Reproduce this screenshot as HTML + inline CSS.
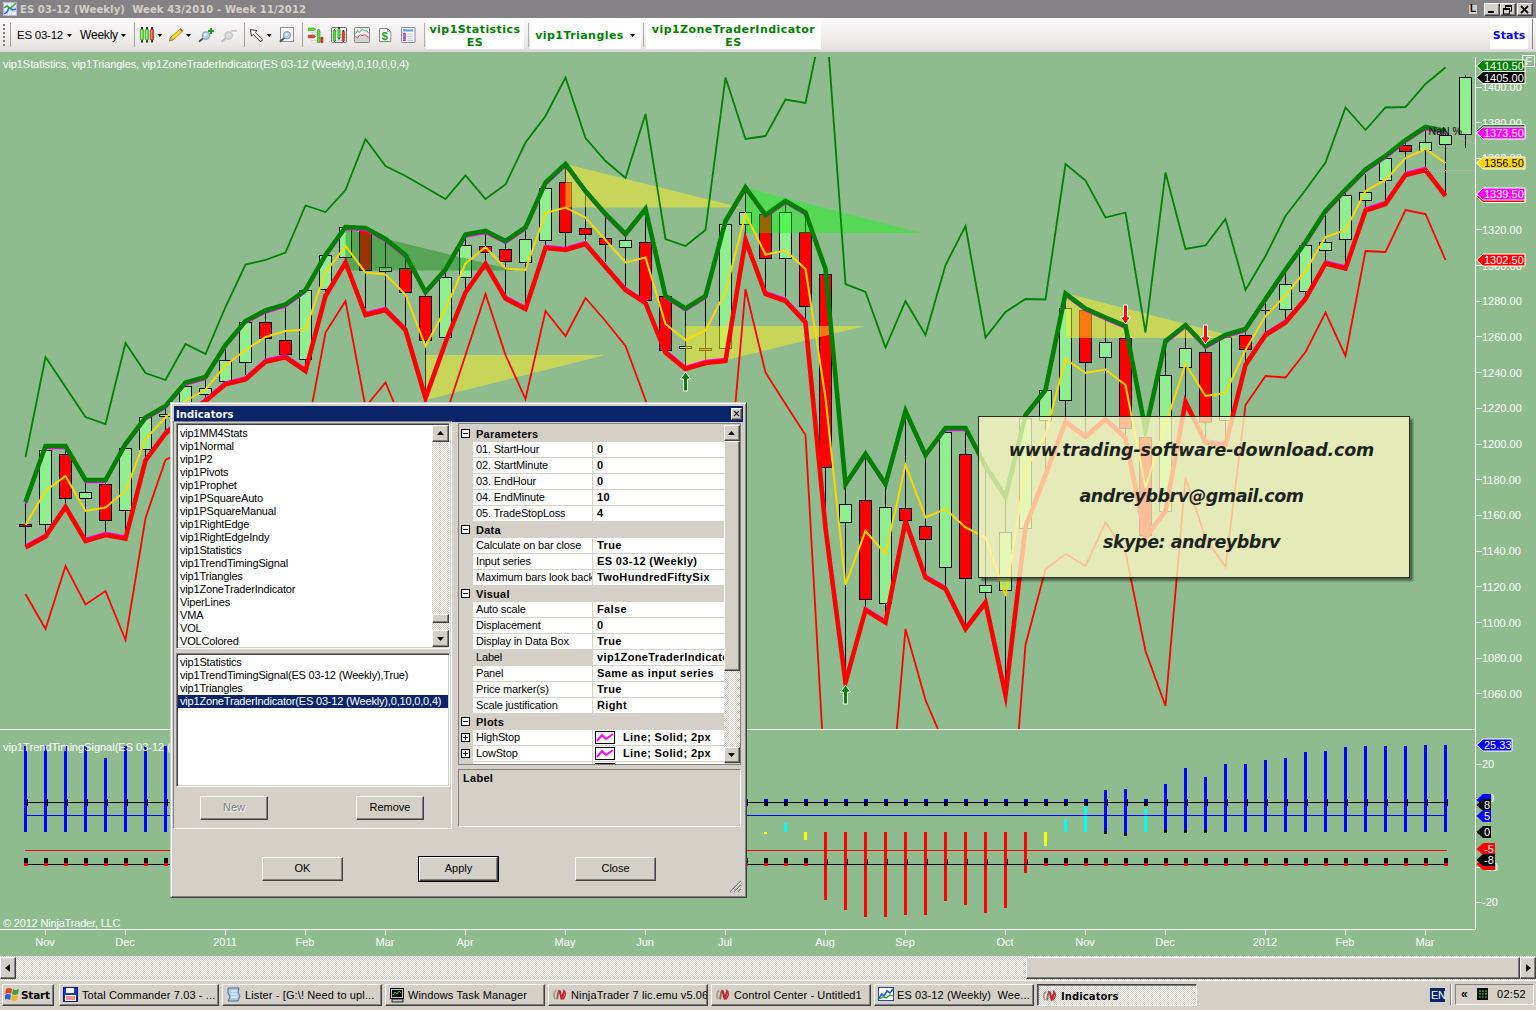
<!DOCTYPE html>
<html><head><meta charset="utf-8"><title>ES 03-12 (Weekly)</title>
<style>
html,body{margin:0;padding:0;background:#d4d0c8;}
body{width:1536px;height:1010px;overflow:hidden;position:relative;font-family:'Liberation Sans',Arial,sans-serif;font-size:11px;color:#000;}
.abs{position:absolute;}
.t{position:absolute;white-space:nowrap;line-height:13px;}
.raised{border:1px solid;border-color:#fff #404040 #404040 #fff;box-shadow:inset -1px -1px 0 #808080,inset 1px 1px 0 #d4d0c8;background:#d4d0c8;box-sizing:border-box;}
.sunken{border:1px solid;border-color:#808080 #fff #fff #808080;box-shadow:inset 1px 1px 0 #404040,inset -1px -1px 0 #d4d0c8;background:#fff;box-sizing:border-box;}
.btn{position:absolute;box-sizing:border-box;background:#d4d0c8;border:1px solid;border-color:#fff #404040 #404040 #fff;box-shadow:inset -1px -1px 0 #808080;text-align:center;line-height:21px;font-size:11px;}
.dith{background-color:#eae8e3;background-image:linear-gradient(45deg,#d4d0c8 25%,transparent 25%,transparent 75%,#d4d0c8 75%),linear-gradient(45deg,#d4d0c8 25%,#fff 25%,#fff 75%,#d4d0c8 75%);background-size:2px 2px;background-position:0 0,1px 1px;}
.tb{position:absolute;top:984px;height:22px;box-sizing:border-box;border:1px solid;border-color:#fff #404040 #404040 #fff;box-shadow:inset -1px -1px 0 #808080;background:#d4d0c8;font-size:11px;line-height:21px;white-space:nowrap;overflow:hidden;}
.tb span{position:absolute;left:22px;top:0;}
.pg{position:absolute;left:0;height:16px;width:266px;box-sizing:border-box;}
.pg .n{position:absolute;left:14px;top:0;width:119px;height:15px;background:#fff;border-right:1px solid #d4d0c8;border-bottom:1px solid #d4d0c8;line-height:15px;padding-left:3px;box-sizing:content-box;overflow:hidden;white-space:nowrap;width:116px;letter-spacing:-0.17px;}
.pg .v{position:absolute;left:134px;top:0;width:128px;height:15px;background:#fff;border-bottom:1px solid #d4d0c8;line-height:15px;padding-left:4px;font-weight:bold;overflow:hidden;white-space:nowrap;letter-spacing:0.38px;}
.pg.cat{background:#d4d0c8;font-weight:bold;line-height:16px;}
.pg.cat b{position:absolute;left:17px;top:0;letter-spacing:0.25px;}
.pm{position:absolute;left:2px;top:3px;width:7px;height:7px;border:1px solid #000;background:#fff;}
.pm:before{content:'';position:absolute;left:1px;top:3px;width:5px;height:1px;background:#000;}
.pm.plus:after{content:'';position:absolute;left:3px;top:1px;width:1px;height:5px;background:#000;}
.dj{font-family:'DejaVu Sans','Liberation Sans',sans-serif;}
.li{position:absolute;left:3px;white-space:nowrap;line-height:13px;height:13px;letter-spacing:-0.18px;}
</style></head>
<body>
<svg class="abs" style="left:0;top:0" width="1536" height="1010" viewBox="0 0 1536 1010" font-family="'Liberation Sans',Arial,sans-serif" font-size="11">
<rect x="0" y="52" width="1536" height="905" fill="#8fbc8f"/>
<defs><clipPath id="cp"><rect x="0" y="57" width="1475" height="672"/></clipPath></defs>
<g clip-path="url(#cp)">
<g shape-rendering="crispEdges" stroke="#000" stroke-width="1">
<line x1="25.5" y1="502" x2="25.5" y2="547"/>
<rect x="19.5" y="524.5" width="12" height="2" fill="#ff0000"/>
<line x1="45.5" y1="446" x2="45.5" y2="535"/>
<rect x="39.5" y="450.5" width="12" height="74" fill="#90ee90"/>
<line x1="65.5" y1="449" x2="65.5" y2="506"/>
<rect x="59.5" y="454.5" width="12" height="44" fill="#ff0000"/>
<line x1="85.5" y1="482" x2="85.5" y2="540"/>
<rect x="79.5" y="492.5" width="12" height="6" fill="#90ee90"/>
<line x1="105.5" y1="480" x2="105.5" y2="534"/>
<rect x="99.5" y="484.5" width="12" height="36" fill="#ff0000"/>
<line x1="125.5" y1="444" x2="125.5" y2="540"/>
<rect x="119.5" y="448.5" width="12" height="62" fill="#90ee90"/>
<line x1="145.5" y1="416" x2="145.5" y2="460"/>
<rect x="139.5" y="417.5" width="12" height="32" fill="#90ee90"/>
<line x1="165.5" y1="406" x2="165.5" y2="430"/>
<rect x="159.5" y="414.5" width="12" height="2" fill="#90ee90"/>
<line x1="185.5" y1="382" x2="185.5" y2="414"/>
<rect x="179.5" y="386.5" width="12" height="16" fill="#90ee90"/>
<line x1="205.5" y1="377" x2="205.5" y2="400"/>
<rect x="199.5" y="388.5" width="12" height="6" fill="#90ee90"/>
<line x1="225.5" y1="346" x2="225.5" y2="383"/>
<rect x="219.5" y="360.5" width="12" height="21" fill="#90ee90"/>
<line x1="245.5" y1="321" x2="245.5" y2="375"/>
<rect x="239.5" y="322.5" width="12" height="40" fill="#90ee90"/>
<line x1="265.5" y1="311" x2="265.5" y2="360"/>
<rect x="259.5" y="322.5" width="12" height="16" fill="#ff0000"/>
<line x1="285.5" y1="305" x2="285.5" y2="356"/>
<rect x="279.5" y="340.5" width="12" height="14" fill="#ff0000"/>
<line x1="305.5" y1="290" x2="305.5" y2="371"/>
<rect x="299.5" y="290.5" width="12" height="69" fill="#90ee90"/>
<line x1="325.5" y1="255" x2="325.5" y2="296"/>
<rect x="319.5" y="255.5" width="12" height="34" fill="#90ee90"/>
<line x1="345.5" y1="227" x2="345.5" y2="262"/>
<rect x="339.5" y="227.5" width="12" height="30" fill="#90ee90"/>
<line x1="365.5" y1="228" x2="365.5" y2="308"/>
<rect x="359.5" y="230.5" width="12" height="40" fill="#ff0000"/>
<line x1="385.5" y1="239" x2="385.5" y2="310"/>
<rect x="379.5" y="267.5" width="12" height="4" fill="#90ee90"/>
<line x1="405.5" y1="255" x2="405.5" y2="330"/>
<rect x="399.5" y="268.5" width="12" height="24" fill="#ff0000"/>
<line x1="425.5" y1="291" x2="425.5" y2="398"/>
<rect x="419.5" y="296.5" width="12" height="44" fill="#ff0000"/>
<line x1="445.5" y1="270" x2="445.5" y2="342"/>
<rect x="439.5" y="277.5" width="12" height="60" fill="#90ee90"/>
<line x1="465.5" y1="234" x2="465.5" y2="296"/>
<rect x="459.5" y="245.5" width="12" height="32" fill="#90ee90"/>
<line x1="485.5" y1="231" x2="485.5" y2="264"/>
<rect x="479.5" y="246.5" width="12" height="6" fill="#ff0000"/>
<line x1="505.5" y1="241" x2="505.5" y2="297"/>
<rect x="499.5" y="249.5" width="12" height="12" fill="#ff0000"/>
<line x1="525.5" y1="228" x2="525.5" y2="309"/>
<rect x="519.5" y="239.5" width="12" height="23" fill="#90ee90"/>
<line x1="545.5" y1="182" x2="545.5" y2="248"/>
<rect x="539.5" y="188.5" width="12" height="52" fill="#90ee90"/>
<line x1="565.5" y1="164" x2="565.5" y2="250"/>
<rect x="559.5" y="182.5" width="12" height="50" fill="#ff0000"/>
<line x1="585.5" y1="191" x2="585.5" y2="244"/>
<rect x="579.5" y="228.5" width="12" height="6" fill="#ff0000"/>
<line x1="605.5" y1="215" x2="605.5" y2="262"/>
<rect x="599.5" y="238.5" width="12" height="6" fill="#ff0000"/>
<line x1="625.5" y1="234" x2="625.5" y2="289"/>
<rect x="619.5" y="240.5" width="12" height="7" fill="#90ee90"/>
<line x1="645.5" y1="209" x2="645.5" y2="303"/>
<rect x="639.5" y="242.5" width="12" height="58" fill="#ff0000"/>
<line x1="665.5" y1="296" x2="665.5" y2="352"/>
<rect x="659.5" y="296.5" width="12" height="54" fill="#ff0000"/>
<line x1="685.5" y1="310" x2="685.5" y2="370"/>
<rect x="679.5" y="346.5" width="12" height="2" fill="#90ee90"/>
<line x1="705.5" y1="298" x2="705.5" y2="362"/>
<rect x="699.5" y="348.5" width="12" height="2" fill="#ff6a00"/>
<line x1="725.5" y1="221" x2="725.5" y2="361"/>
<rect x="719.5" y="224.5" width="12" height="124" fill="#90ee90"/>
<line x1="745.5" y1="189" x2="745.5" y2="240"/>
<rect x="739.5" y="212.5" width="12" height="12" fill="#90ee90"/>
<line x1="765.5" y1="215" x2="765.5" y2="295"/>
<rect x="759.5" y="214.5" width="12" height="44" fill="#ff0000"/>
<line x1="785.5" y1="201" x2="785.5" y2="301"/>
<rect x="779.5" y="212.5" width="12" height="46" fill="#90ee90"/>
<line x1="805.5" y1="212" x2="805.5" y2="322"/>
<rect x="799.5" y="232.5" width="12" height="74" fill="#ff0000"/>
<line x1="825.5" y1="269" x2="825.5" y2="512"/>
<rect x="819.5" y="274.5" width="12" height="193" fill="#ff0000"/>
<line x1="845.5" y1="484" x2="845.5" y2="682"/>
<rect x="839.5" y="504.5" width="12" height="18" fill="#90ee90"/>
<line x1="865.5" y1="454" x2="865.5" y2="610"/>
<rect x="859.5" y="500.5" width="12" height="99" fill="#ff0000"/>
<line x1="885.5" y1="484" x2="885.5" y2="622"/>
<rect x="879.5" y="507.5" width="12" height="96" fill="#90ee90"/>
<line x1="905.5" y1="411" x2="905.5" y2="521"/>
<rect x="899.5" y="508.5" width="12" height="12" fill="#ff0000"/>
<line x1="925.5" y1="455" x2="925.5" y2="578"/>
<rect x="919.5" y="526.5" width="12" height="13" fill="#ff0000"/>
<line x1="945.5" y1="428" x2="945.5" y2="588"/>
<rect x="939.5" y="432.5" width="12" height="135" fill="#90ee90"/>
<line x1="965.5" y1="428" x2="965.5" y2="629"/>
<rect x="959.5" y="454.5" width="12" height="124" fill="#ff0000"/>
<line x1="985.5" y1="466" x2="985.5" y2="602"/>
<rect x="979.5" y="585.5" width="12" height="7" fill="#90ee90"/>
<line x1="1005.5" y1="497" x2="1005.5" y2="695"/>
<rect x="999.5" y="532.5" width="12" height="58" fill="#90ee90"/>
<line x1="1025.5" y1="415" x2="1025.5" y2="528"/>
<rect x="1019.5" y="418.5" width="12" height="110" fill="#90ee90"/>
<line x1="1045.5" y1="390" x2="1045.5" y2="475"/>
<rect x="1039.5" y="390.5" width="12" height="30" fill="#90ee90"/>
<line x1="1065.5" y1="294" x2="1065.5" y2="422"/>
<rect x="1059.5" y="308.5" width="12" height="92" fill="#90ee90"/>
<line x1="1085.5" y1="308" x2="1085.5" y2="436"/>
<rect x="1079.5" y="310.5" width="12" height="52" fill="#ff0000"/>
<line x1="1105.5" y1="319" x2="1105.5" y2="420"/>
<rect x="1099.5" y="342.5" width="12" height="15" fill="#90ee90"/>
<line x1="1125.5" y1="326" x2="1125.5" y2="440"/>
<rect x="1119.5" y="338.5" width="12" height="90" fill="#ff0000"/>
<line x1="1145.5" y1="430" x2="1145.5" y2="540"/>
<rect x="1139.5" y="437.5" width="12" height="98" fill="#ff0000"/>
<line x1="1165.5" y1="341" x2="1165.5" y2="512"/>
<rect x="1159.5" y="375.5" width="12" height="136" fill="#90ee90"/>
<line x1="1185.5" y1="325" x2="1185.5" y2="401"/>
<rect x="1179.5" y="348.5" width="12" height="19" fill="#90ee90"/>
<line x1="1205.5" y1="346" x2="1205.5" y2="442"/>
<rect x="1199.5" y="352.5" width="12" height="70" fill="#ff0000"/>
<line x1="1225.5" y1="335" x2="1225.5" y2="445"/>
<rect x="1219.5" y="337.5" width="12" height="83" fill="#90ee90"/>
<line x1="1245.5" y1="329" x2="1245.5" y2="365"/>
<rect x="1239.5" y="335.5" width="12" height="14" fill="#ff0000"/>
<line x1="1265.5" y1="298" x2="1265.5" y2="335"/>
<rect x="1259.0" y="309.5" width="13" height="1" fill="#000" stroke="none"/>
<line x1="1285.5" y1="270" x2="1285.5" y2="322"/>
<rect x="1279.5" y="284.5" width="12" height="25" fill="#90ee90"/>
<line x1="1305.5" y1="244" x2="1305.5" y2="299"/>
<rect x="1299.5" y="245.5" width="12" height="46" fill="#90ee90"/>
<line x1="1325.5" y1="215" x2="1325.5" y2="261"/>
<rect x="1319.5" y="242.5" width="12" height="8" fill="#90ee90"/>
<line x1="1345.5" y1="191" x2="1345.5" y2="268"/>
<rect x="1339.5" y="195.5" width="12" height="44" fill="#90ee90"/>
<line x1="1365.5" y1="174" x2="1365.5" y2="210"/>
<rect x="1359.5" y="192.5" width="12" height="8" fill="#90ee90"/>
<line x1="1385.5" y1="156" x2="1385.5" y2="202"/>
<rect x="1379.5" y="158.5" width="12" height="22" fill="#90ee90"/>
<line x1="1405.5" y1="142" x2="1405.5" y2="174"/>
<rect x="1399.5" y="145.5" width="12" height="6" fill="#ff0000"/>
<line x1="1425.5" y1="128" x2="1425.5" y2="170"/>
<rect x="1419.5" y="142.5" width="12" height="8" fill="#90ee90"/>
<line x1="1445.5" y1="131" x2="1445.5" y2="195"/>
<rect x="1439.5" y="135.5" width="12" height="9" fill="#90ee90"/>
<line x1="1465.5" y1="75" x2="1465.5" y2="148"/>
<rect x="1459.5" y="77.5" width="12" height="57" fill="#90ee90"/>
</g>
<polygon points="345.5,229 345.5,270.5 515,270.5" fill="#008000" fill-opacity="0.4"/>
<polygon points="425.5,355 425.5,400 605,355" fill="#fff021" fill-opacity="0.5"/>
<polygon points="685.5,326 685.5,370 865,326" fill="#fff021" fill-opacity="0.5"/>
<polygon points="565.5,164 565.5,207.5 741,207.5" fill="#fff021" fill-opacity="0.5"/>
<polygon points="745.5,187.5 745.5,233 921,233" fill="#00ff00" fill-opacity="0.4"/>
<polygon points="1065.5,293 1065.5,338 1240,338" fill="#fff021" fill-opacity="0.5"/>
<polyline points="25.5,457.0 45.5,357.0 65.5,387.0 85.5,417.0 105.5,424.0 125.5,343.0 145.5,373.0 165.5,380.0 185.5,344.0 205.5,354.0 225.5,307.0 245.5,264.5 265.5,260.0 285.5,252.5 305.5,205.5 325.5,212.0 345.5,190.0 365.5,139.0 385.5,166.0 405.5,176.0 425.5,187.5 445.5,199.0 465.5,175.5 485.5,199.0 505.5,184.5 525.5,142.5 545.5,116.0 565.5,77.5 585.5,138.0 605.5,161.0 625.5,178.0 645.5,114.0 665.5,239.0 685.5,246.0 705.5,230.0 725.5,77.5 745.5,139.0 765.5,136.0 785.5,99.5 805.5,103.0 825.5,8.0 845.5,284.0 865.5,292.0 885.5,347.5 905.5,301.0 925.5,335.0 945.5,265.0 965.5,226.0 985.5,337.5 1005.5,312.0 1025.5,299.0 1045.5,299.5 1065.5,164.0 1085.5,180.5 1105.5,217.5 1125.5,212.5 1145.5,332.5 1165.5,172.5 1185.5,249.0 1205.5,245.5 1225.5,219.0 1245.5,290.0 1265.5,256.0 1285.5,216.0 1305.5,190.0 1325.5,162.5 1345.5,107.5 1365.5,130.0 1385.5,107.5 1405.5,107.0 1425.5,84.0 1445.5,67.5" fill="none" stroke="#008000" stroke-width="1.8" stroke-linejoin="miter"/>
<polyline points="25.5,594.0 45.5,629.0 65.5,566.0 85.5,604.5 105.5,591.0 125.5,640.0 145.5,518.0 165.5,460.0 185.5,450.0 205.5,445.0 225.5,430.0 245.5,425.0 265.5,410.0 285.5,405.0 305.5,440.0 325.5,332.5 345.5,301.0 365.5,407.0 385.5,382.5 405.5,430.0 425.5,470.0 445.5,416.0 465.5,355.0 485.5,294.0 505.5,355.0 525.5,399.0 545.5,311.0 565.5,336.0 585.5,298.0 605.5,321.0 625.5,346.0 645.5,400.0 665.5,450.0 685.5,470.0 705.5,460.0 725.5,516.0 745.5,289.0 765.5,372.5 785.5,404.0 805.5,435.0 825.5,790.0 845.5,900.0 865.5,850.0 885.5,860.0 905.5,629.0 925.5,700.0 945.5,747.0 965.5,800.0 985.5,780.0 1005.5,897.0 1025.5,645.0 1045.5,569.0 1065.5,554.0 1085.5,566.0 1105.5,522.5 1125.5,552.0 1145.5,651.0 1165.5,706.0 1185.5,477.5 1205.5,538.0 1225.5,567.0 1245.5,405.0 1265.5,376.0 1285.5,377.5 1305.5,352.0 1325.5,312.5 1345.5,356.0 1365.5,251.0 1385.5,252.0 1405.5,210.0 1425.5,214.0 1445.5,260.0" fill="none" stroke="#ff0000" stroke-width="1.8" stroke-linejoin="miter"/>
<polyline points="25.5,504.2 45.5,448.2 65.5,448.2 85.5,482.2 105.5,482.2 125.5,446.2 145.5,419.7 165.5,408.2 185.5,384.7 205.5,379.2 225.5,347.2 245.5,323.2 265.5,312.7 285.5,306.7 305.5,292.2 325.5,257.2 345.5,229.2 365.5,230.2 385.5,241.2 405.5,257.2 425.5,294.2 445.5,271.7 465.5,236.7 485.5,233.2 505.5,243.2 525.5,229.7 545.5,184.7 565.5,166.2 585.5,193.2 605.5,216.2 625.5,236.2 645.5,211.2 665.5,298.2 685.5,310.7 705.5,298.2 725.5,223.2 745.5,189.7 765.5,217.2 785.5,203.2 805.5,214.7 825.5,271.2 845.5,486.2 865.5,456.2 885.5,486.2 905.5,413.2 925.5,457.2 945.5,430.2 965.5,430.2 985.5,468.2 1005.5,499.2 1025.5,417.2 1045.5,392.2 1065.5,295.7 1085.5,310.7 1105.5,319.7 1125.5,328.2 1145.5,432.2 1165.5,343.2 1185.5,327.2 1205.5,348.2 1225.5,337.2 1245.5,331.2 1265.5,301.2 1285.5,271.7 1305.5,244.2 1325.5,213.2 1345.5,191.7 1365.5,171.7 1385.5,158.2 1405.5,142.2 1425.5,129.2 1445.5,133.2" fill="none" stroke="#ff00ff" stroke-width="2" stroke-linejoin="round"/>
<polyline points="25.5,545.3 45.5,534.3 65.5,504.8 85.5,538.8 105.5,532.8 125.5,536.3 145.5,458.3 165.5,431.3 185.5,413.8 205.5,398.8 225.5,382.1 245.5,377.1 265.5,359.6 285.5,355.1 305.5,368.8 325.5,293.8 345.5,260.3 365.5,312.8 385.5,307.8 405.5,327.8 425.5,395.8 445.5,340.3 465.5,290.3 485.5,261.8 505.5,296.3 525.5,306.8 545.5,245.8 565.5,247.8 585.5,241.8 605.5,264.8 625.5,287.8 645.5,300.8 665.5,350.3 685.5,366.8 705.5,360.8 725.5,358.8 745.5,237.8 765.5,291.8 785.5,298.8 805.5,320.3 825.5,525.8 845.5,680.3 865.5,607.8 885.5,620.3 905.5,518.8 925.5,575.3 945.5,586.8 965.5,626.8 985.5,600.3 1005.5,692.8 1025.5,524.8 1045.5,472.8 1065.5,419.8 1085.5,434.8 1105.5,417.3 1125.5,435.8 1145.5,535.8 1165.5,508.8 1185.5,399.8 1205.5,440.3 1225.5,442.8 1245.5,362.8 1265.5,332.8 1285.5,320.3 1305.5,296.8 1325.5,261.2 1345.5,266.3 1365.5,208.3 1385.5,201.8 1405.5,172.8 1425.5,167.8 1445.5,193.8" fill="none" stroke="#ff00ff" stroke-width="2" stroke-linejoin="round"/>
<polyline points="25.5,547.5 45.5,536.5 65.5,507.0 85.5,541.0 105.5,535.0 125.5,538.5 145.5,460.5 165.5,433.5 185.5,416.0 205.5,401.0 225.5,384.3 245.5,379.3 265.5,361.8 285.5,357.3 305.5,371.0 325.5,296.0 345.5,262.5 365.5,315.0 385.5,310.0 405.5,330.0 425.5,398.0 445.5,342.5 465.5,292.5 485.5,264.0 505.5,298.5 525.5,309.0 545.5,248.0 565.5,250.0 585.5,244.0 605.5,267.0 625.5,290.0 645.5,303.0 665.5,352.5 685.5,369.0 705.5,363.0 725.5,361.0 745.5,240.0 765.5,294.0 785.5,301.0 805.5,322.5 825.5,528.0 845.5,682.5 865.5,610.0 885.5,622.5 905.5,521.0 925.5,577.5 945.5,589.0 965.5,629.0 985.5,602.5 1005.5,695.0 1025.5,527.0 1045.5,475.0 1065.5,422.0 1085.5,437.0 1105.5,419.5 1125.5,438.0 1145.5,538.0 1165.5,511.0 1185.5,402.0 1205.5,442.5 1225.5,445.0 1245.5,365.0 1265.5,335.0 1285.5,322.5 1305.5,299.0 1325.5,263.4 1345.5,268.5 1365.5,210.5 1385.5,204.0 1405.5,175.0 1425.5,170.0 1445.5,196.0" fill="none" stroke="#ff0000" stroke-width="4.6" stroke-linejoin="miter" stroke-miterlimit="12"/>
<polyline points="25.5,502.0 45.5,446.0 65.5,446.0 85.5,480.0 105.5,480.0 125.5,444.0 145.5,417.5 165.5,406.0 185.5,382.5 205.5,377.0 225.5,345.0 245.5,321.0 265.5,310.5 285.5,304.5 305.5,290.0 325.5,255.0 345.5,227.0 365.5,228.0 385.5,239.0 405.5,255.0 425.5,292.0 445.5,269.5 465.5,234.5 485.5,231.0 505.5,241.0 525.5,227.5 545.5,182.5 565.5,164.0 585.5,191.0 605.5,214.0 625.5,234.0 645.5,209.0 665.5,296.0 685.5,308.5 705.5,296.0 725.5,221.0 745.5,187.5 765.5,215.0 785.5,201.0 805.5,212.5 825.5,269.0 845.5,484.0 865.5,454.0 885.5,484.0 905.5,411.0 925.5,455.0 945.5,428.0 965.5,428.0 985.5,466.0 1005.5,497.0 1025.5,415.0 1045.5,390.0 1065.5,293.5 1085.5,308.5 1105.5,317.5 1125.5,326.0 1145.5,430.0 1165.5,341.0 1185.5,325.0 1205.5,346.0 1225.5,335.0 1245.5,329.0 1265.5,299.0 1285.5,269.5 1305.5,242.0 1325.5,211.0 1345.5,189.5 1365.5,169.5 1385.5,156.0 1405.5,140.0 1425.5,127.0 1445.5,131.0" fill="none" stroke="#008000" stroke-width="4.6" stroke-linejoin="miter" stroke-miterlimit="12"/>
<polyline points="25.5,525.0 45.5,491.0 65.5,476.0 85.5,511.0 105.5,507.5 125.5,491.0 145.5,439.0 165.5,417.5 185.5,401.0 205.5,389.5 225.5,365.5 245.5,350.0 265.5,337.0 285.5,331.0 305.5,329.5 325.5,272.5 345.5,246.0 365.5,272.5 385.5,274.5 405.5,294.5 425.5,346.0 445.5,309.0 465.5,263.5 485.5,247.0 505.5,268.5 525.5,270.0 545.5,213.0 565.5,207.5 585.5,217.5 605.5,240.0 625.5,262.5 645.5,257.5 665.5,324.0 685.5,340.0 705.5,330.5 725.5,292.0 745.5,214.0 765.5,254.5 785.5,250.5 805.5,269.0 825.5,397.5 845.5,585.0 865.5,531.0 885.5,554.0 905.5,465.0 925.5,517.5 945.5,509.0 965.5,527.5 985.5,537.5 1005.5,596.0 1025.5,470.0 1045.5,435.0 1065.5,359.0 1085.5,373.0 1105.5,369.5 1125.5,385.0 1145.5,487.5 1165.5,425.0 1185.5,364.0 1205.5,396.0 1225.5,393.0 1245.5,350.0 1265.5,316.0 1285.5,295.5 1305.5,271.0 1325.5,237.0 1345.5,230.0 1365.5,191.0 1385.5,180.0 1405.5,158.0 1425.5,149.0 1445.5,163.0" fill="none" stroke="#ffd700" stroke-width="2" stroke-linejoin="miter"/>
<path d="M685.5 372 l5 7 h-3 v12 h-4 v-12 h-3 z" fill="#008000" stroke="#fff" stroke-width="1"/>
<path d="M845.5 685 l5 7 h-3 v12 h-4 v-12 h-3 z" fill="#008000" stroke="#fff" stroke-width="1"/>
<path d="M1125.5 324 l5 -7 h-3 v-12 h-4 v12 h-3 z" fill="#ff0000" stroke="#fff" stroke-width="1"/>
<path d="M1205.5 344 l5 -7 h-3 v-12 h-4 v12 h-3 z" fill="#ff0000" stroke="#fff" stroke-width="1"/>
<line x1="1425" y1="170.5" x2="1475" y2="170.5" stroke="#d8b0b0" stroke-width="1" stroke-dasharray="1 1"/>
<line x1="1445" y1="132" x2="1475" y2="144" stroke="#d8b0b0" stroke-width="1" stroke-dasharray="1 1"/>
<text x="1428.5" y="135" fill="#000" textLength="33.5" lengthAdjust="spacingAndGlyphs">NaN %</text>
</g>
<text x="3" y="68" fill="#fff" textLength="406" lengthAdjust="spacing">vip1Statistics, vip1Triangles, vip1ZoneTraderIndicator(ES 03-12 (Weekly),0,10,0,0,4)</text>
<text x="3" y="927" fill="#fff" textLength="117.5" lengthAdjust="spacing">© 2012 NinjaTrader, LLC</text>
<g shape-rendering="crispEdges">
<rect x="23.5" y="746" width="3" height="86" fill="#0000ff"/>
<rect x="43.5" y="746" width="3" height="86" fill="#0000ff"/>
<rect x="63.5" y="746" width="3" height="86" fill="#0000ff"/>
<rect x="83.5" y="746" width="3" height="86" fill="#0000ff"/>
<rect x="103.5" y="758" width="3" height="74" fill="#0000ff"/>
<rect x="123.5" y="746" width="3" height="86" fill="#0000ff"/>
<rect x="143.5" y="746" width="3" height="86" fill="#0000ff"/>
<rect x="163.5" y="746" width="3" height="86" fill="#0000ff"/>
<rect x="183.5" y="760" width="3" height="72" fill="#0000ff"/>
<rect x="203.5" y="760" width="3" height="72" fill="#0000ff"/>
<rect x="223.5" y="760" width="3" height="72" fill="#0000ff"/>
<rect x="243.5" y="760" width="3" height="72" fill="#0000ff"/>
<rect x="263.5" y="760" width="3" height="72" fill="#0000ff"/>
<rect x="283.5" y="760" width="3" height="72" fill="#0000ff"/>
<rect x="303.5" y="760" width="3" height="72" fill="#0000ff"/>
<rect x="323.5" y="760" width="3" height="72" fill="#0000ff"/>
<rect x="343.5" y="760" width="3" height="72" fill="#0000ff"/>
<rect x="363.5" y="760" width="3" height="72" fill="#0000ff"/>
<rect x="383.5" y="760" width="3" height="72" fill="#0000ff"/>
<rect x="403.5" y="760" width="3" height="72" fill="#0000ff"/>
<rect x="423.5" y="760" width="3" height="72" fill="#0000ff"/>
<rect x="443.5" y="760" width="3" height="72" fill="#0000ff"/>
<rect x="463.5" y="760" width="3" height="72" fill="#0000ff"/>
<rect x="483.5" y="760" width="3" height="72" fill="#0000ff"/>
<rect x="503.5" y="760" width="3" height="72" fill="#0000ff"/>
<rect x="523.5" y="760" width="3" height="72" fill="#0000ff"/>
<rect x="543.5" y="760" width="3" height="72" fill="#0000ff"/>
<rect x="563.5" y="760" width="3" height="72" fill="#0000ff"/>
<rect x="583.5" y="760" width="3" height="72" fill="#0000ff"/>
<rect x="603.5" y="760" width="3" height="72" fill="#0000ff"/>
<rect x="623.5" y="760" width="3" height="72" fill="#0000ff"/>
<rect x="643.5" y="760" width="3" height="72" fill="#0000ff"/>
<rect x="663.5" y="760" width="3" height="72" fill="#0000ff"/>
<rect x="683.5" y="760" width="3" height="72" fill="#0000ff"/>
<rect x="703.5" y="760" width="3" height="72" fill="#0000ff"/>
<rect x="723.5" y="760" width="3" height="72" fill="#0000ff"/>
<rect x="743.5" y="832" width="3" height="2" fill="#ffff00"/>
<rect x="763.5" y="832" width="3" height="2" fill="#ffff00"/>
<rect x="783.5" y="823" width="3" height="9" fill="#00ffff"/>
<rect x="803.5" y="832" width="3" height="8" fill="#ffff00"/>
<rect x="823.5" y="832" width="3" height="68" fill="#ff0000"/>
<rect x="843.5" y="832" width="3" height="78" fill="#ff0000"/>
<rect x="863.5" y="832" width="3" height="85" fill="#ff0000"/>
<rect x="883.5" y="832" width="3" height="85" fill="#ff0000"/>
<rect x="903.5" y="832" width="3" height="83" fill="#ff0000"/>
<rect x="923.5" y="832" width="3" height="83" fill="#ff0000"/>
<rect x="943.5" y="832" width="3" height="69" fill="#ff0000"/>
<rect x="963.5" y="832" width="3" height="73" fill="#ff0000"/>
<rect x="983.5" y="832" width="3" height="81" fill="#ff0000"/>
<rect x="1003.5" y="832" width="3" height="76" fill="#ff0000"/>
<rect x="1023.5" y="832" width="3" height="41" fill="#ff0000"/>
<rect x="1043.5" y="832" width="3" height="14" fill="#ffff00"/>
<rect x="1063.5" y="819" width="3" height="13" fill="#00ffff"/>
<rect x="1083.5" y="804" width="3" height="28" fill="#00ffff"/>
<rect x="1103.5" y="790" width="3" height="43" fill="#0000ff"/>
<rect x="1103.5" y="831" width="3" height="3" fill="#000"/>
<rect x="1123.5" y="789" width="3" height="46" fill="#0000ff"/>
<rect x="1123.5" y="833" width="3" height="3" fill="#000"/>
<rect x="1143.5" y="809" width="3" height="23" fill="#00ffff"/>
<rect x="1163.5" y="784" width="3" height="48" fill="#0000ff"/>
<rect x="1163.5" y="830" width="3" height="3" fill="#000"/>
<rect x="1183.5" y="768" width="3" height="64" fill="#0000ff"/>
<rect x="1183.5" y="830" width="3" height="3" fill="#000"/>
<rect x="1203.5" y="777" width="3" height="55" fill="#0000ff"/>
<rect x="1203.5" y="830" width="3" height="3" fill="#000"/>
<rect x="1223.5" y="764" width="3" height="68" fill="#0000ff"/>
<rect x="1243.5" y="764" width="3" height="68" fill="#0000ff"/>
<rect x="1263.5" y="760" width="3" height="72" fill="#0000ff"/>
<rect x="1283.5" y="758" width="3" height="74" fill="#0000ff"/>
<rect x="1303.5" y="752" width="3" height="80" fill="#0000ff"/>
<rect x="1323.5" y="751" width="3" height="81" fill="#0000ff"/>
<rect x="1343.5" y="747" width="3" height="85" fill="#0000ff"/>
<rect x="1363.5" y="746" width="3" height="86" fill="#0000ff"/>
<rect x="1383.5" y="746" width="3" height="86" fill="#0000ff"/>
<rect x="1403.5" y="746" width="3" height="86" fill="#0000ff"/>
<rect x="1423.5" y="745" width="3" height="87" fill="#0000ff"/>
<rect x="1443.5" y="745" width="3" height="87" fill="#0000ff"/>
<rect x="25" y="802" width="1422" height="1" fill="#000"/>
<rect x="25" y="815" width="1422" height="1" fill="#0000ff"/>
<rect x="25" y="850" width="1422" height="1" fill="#ff0000"/>
<rect x="25" y="864" width="1422" height="1" fill="#000"/>
<rect x="26.5" y="799" width="1" height="7" fill="#000"/>
<rect x="23.5" y="858" width="4" height="5" fill="#000"/>
<rect x="23.5" y="863" width="4" height="3" fill="#ff0000"/>
<rect x="46.5" y="799" width="1" height="7" fill="#000"/>
<rect x="43.5" y="858" width="4" height="5" fill="#000"/>
<rect x="43.5" y="863" width="4" height="3" fill="#ff0000"/>
<rect x="66.5" y="799" width="1" height="7" fill="#000"/>
<rect x="63.5" y="858" width="4" height="5" fill="#000"/>
<rect x="63.5" y="863" width="4" height="3" fill="#ff0000"/>
<rect x="86.5" y="799" width="1" height="7" fill="#000"/>
<rect x="83.5" y="858" width="4" height="5" fill="#000"/>
<rect x="83.5" y="863" width="4" height="3" fill="#ff0000"/>
<rect x="106.5" y="799" width="1" height="7" fill="#000"/>
<rect x="103.5" y="858" width="4" height="5" fill="#000"/>
<rect x="103.5" y="863" width="4" height="3" fill="#ff0000"/>
<rect x="126.5" y="799" width="1" height="7" fill="#000"/>
<rect x="123.5" y="858" width="4" height="5" fill="#000"/>
<rect x="123.5" y="863" width="4" height="3" fill="#ff0000"/>
<rect x="146.5" y="799" width="1" height="7" fill="#000"/>
<rect x="143.5" y="858" width="4" height="5" fill="#000"/>
<rect x="143.5" y="863" width="4" height="3" fill="#ff0000"/>
<rect x="166.5" y="799" width="1" height="7" fill="#000"/>
<rect x="163.5" y="858" width="4" height="5" fill="#000"/>
<rect x="163.5" y="863" width="4" height="3" fill="#ff0000"/>
<rect x="186.5" y="799" width="1" height="7" fill="#000"/>
<rect x="183.5" y="858" width="4" height="5" fill="#000"/>
<rect x="183.5" y="863" width="4" height="3" fill="#ff0000"/>
<rect x="206.5" y="799" width="1" height="7" fill="#000"/>
<rect x="203.5" y="858" width="4" height="5" fill="#000"/>
<rect x="203.5" y="863" width="4" height="3" fill="#ff0000"/>
<rect x="226.5" y="799" width="1" height="7" fill="#000"/>
<rect x="223.5" y="858" width="4" height="5" fill="#000"/>
<rect x="223.5" y="863" width="4" height="3" fill="#ff0000"/>
<rect x="246.5" y="799" width="1" height="7" fill="#000"/>
<rect x="243.5" y="858" width="4" height="5" fill="#000"/>
<rect x="243.5" y="863" width="4" height="3" fill="#ff0000"/>
<rect x="266.5" y="799" width="1" height="7" fill="#000"/>
<rect x="263.5" y="858" width="4" height="5" fill="#000"/>
<rect x="263.5" y="863" width="4" height="3" fill="#ff0000"/>
<rect x="286.5" y="799" width="1" height="7" fill="#000"/>
<rect x="283.5" y="858" width="4" height="5" fill="#000"/>
<rect x="283.5" y="863" width="4" height="3" fill="#ff0000"/>
<rect x="306.5" y="799" width="1" height="7" fill="#000"/>
<rect x="303.5" y="858" width="4" height="5" fill="#000"/>
<rect x="303.5" y="863" width="4" height="3" fill="#ff0000"/>
<rect x="326.5" y="799" width="1" height="7" fill="#000"/>
<rect x="323.5" y="858" width="4" height="5" fill="#000"/>
<rect x="323.5" y="863" width="4" height="3" fill="#ff0000"/>
<rect x="346.5" y="799" width="1" height="7" fill="#000"/>
<rect x="343.5" y="858" width="4" height="5" fill="#000"/>
<rect x="343.5" y="863" width="4" height="3" fill="#ff0000"/>
<rect x="366.5" y="799" width="1" height="7" fill="#000"/>
<rect x="363.5" y="858" width="4" height="5" fill="#000"/>
<rect x="363.5" y="863" width="4" height="3" fill="#ff0000"/>
<rect x="386.5" y="799" width="1" height="7" fill="#000"/>
<rect x="383.5" y="858" width="4" height="5" fill="#000"/>
<rect x="383.5" y="863" width="4" height="3" fill="#ff0000"/>
<rect x="406.5" y="799" width="1" height="7" fill="#000"/>
<rect x="403.5" y="858" width="4" height="5" fill="#000"/>
<rect x="403.5" y="863" width="4" height="3" fill="#ff0000"/>
<rect x="426.5" y="799" width="1" height="7" fill="#000"/>
<rect x="423.5" y="858" width="4" height="5" fill="#000"/>
<rect x="423.5" y="863" width="4" height="3" fill="#ff0000"/>
<rect x="446.5" y="799" width="1" height="7" fill="#000"/>
<rect x="443.5" y="858" width="4" height="5" fill="#000"/>
<rect x="443.5" y="863" width="4" height="3" fill="#ff0000"/>
<rect x="466.5" y="799" width="1" height="7" fill="#000"/>
<rect x="463.5" y="858" width="4" height="5" fill="#000"/>
<rect x="463.5" y="863" width="4" height="3" fill="#ff0000"/>
<rect x="486.5" y="799" width="1" height="7" fill="#000"/>
<rect x="483.5" y="858" width="4" height="5" fill="#000"/>
<rect x="483.5" y="863" width="4" height="3" fill="#ff0000"/>
<rect x="506.5" y="799" width="1" height="7" fill="#000"/>
<rect x="503.5" y="858" width="4" height="5" fill="#000"/>
<rect x="503.5" y="863" width="4" height="3" fill="#ff0000"/>
<rect x="526.5" y="799" width="1" height="7" fill="#000"/>
<rect x="523.5" y="858" width="4" height="5" fill="#000"/>
<rect x="523.5" y="863" width="4" height="3" fill="#ff0000"/>
<rect x="546.5" y="799" width="1" height="7" fill="#000"/>
<rect x="543.5" y="858" width="4" height="5" fill="#000"/>
<rect x="543.5" y="863" width="4" height="3" fill="#ff0000"/>
<rect x="566.5" y="799" width="1" height="7" fill="#000"/>
<rect x="563.5" y="858" width="4" height="5" fill="#000"/>
<rect x="563.5" y="863" width="4" height="3" fill="#ff0000"/>
<rect x="586.5" y="799" width="1" height="7" fill="#000"/>
<rect x="583.5" y="858" width="4" height="5" fill="#000"/>
<rect x="583.5" y="863" width="4" height="3" fill="#ff0000"/>
<rect x="606.5" y="799" width="1" height="7" fill="#000"/>
<rect x="603.5" y="858" width="4" height="5" fill="#000"/>
<rect x="603.5" y="863" width="4" height="3" fill="#ff0000"/>
<rect x="626.5" y="799" width="1" height="7" fill="#000"/>
<rect x="623.5" y="858" width="4" height="5" fill="#000"/>
<rect x="623.5" y="863" width="4" height="3" fill="#ff0000"/>
<rect x="646.5" y="799" width="1" height="7" fill="#000"/>
<rect x="643.5" y="858" width="4" height="5" fill="#000"/>
<rect x="643.5" y="863" width="4" height="3" fill="#ff0000"/>
<rect x="666.5" y="799" width="1" height="7" fill="#000"/>
<rect x="663.5" y="858" width="4" height="5" fill="#000"/>
<rect x="663.5" y="863" width="4" height="3" fill="#ff0000"/>
<rect x="686.5" y="799" width="1" height="7" fill="#000"/>
<rect x="683.5" y="858" width="4" height="5" fill="#000"/>
<rect x="683.5" y="863" width="4" height="3" fill="#ff0000"/>
<rect x="706.5" y="799" width="1" height="7" fill="#000"/>
<rect x="703.5" y="858" width="4" height="5" fill="#000"/>
<rect x="703.5" y="863" width="4" height="3" fill="#ff0000"/>
<rect x="726.5" y="799" width="1" height="7" fill="#000"/>
<rect x="723.5" y="858" width="4" height="5" fill="#000"/>
<rect x="723.5" y="863" width="4" height="3" fill="#ff0000"/>
<rect x="743.5" y="799" width="4" height="3" fill="#0000c8"/>
<rect x="743.5" y="802" width="4" height="4" fill="#000"/>
<rect x="743.5" y="858" width="4" height="5" fill="#000"/>
<rect x="743.5" y="863" width="4" height="3" fill="#ff0000"/>
<rect x="763.5" y="799" width="4" height="3" fill="#0000c8"/>
<rect x="763.5" y="802" width="4" height="4" fill="#000"/>
<rect x="763.5" y="858" width="4" height="5" fill="#000"/>
<rect x="763.5" y="863" width="4" height="3" fill="#ff0000"/>
<rect x="783.5" y="799" width="4" height="3" fill="#0000c8"/>
<rect x="783.5" y="802" width="4" height="4" fill="#000"/>
<rect x="783.5" y="858" width="4" height="5" fill="#000"/>
<rect x="783.5" y="863" width="4" height="3" fill="#ff0000"/>
<rect x="803.5" y="799" width="4" height="3" fill="#0000c8"/>
<rect x="803.5" y="802" width="4" height="4" fill="#000"/>
<rect x="803.5" y="858" width="4" height="5" fill="#000"/>
<rect x="803.5" y="863" width="4" height="3" fill="#ff0000"/>
<rect x="823.5" y="799" width="4" height="3" fill="#0000c8"/>
<rect x="823.5" y="802" width="4" height="4" fill="#000"/>
<rect x="826.5" y="859" width="1" height="5" fill="#000"/>
<rect x="843.5" y="799" width="4" height="3" fill="#0000c8"/>
<rect x="843.5" y="802" width="4" height="4" fill="#000"/>
<rect x="846.5" y="859" width="1" height="5" fill="#000"/>
<rect x="863.5" y="799" width="4" height="3" fill="#0000c8"/>
<rect x="863.5" y="802" width="4" height="4" fill="#000"/>
<rect x="866.5" y="859" width="1" height="5" fill="#000"/>
<rect x="883.5" y="799" width="4" height="3" fill="#0000c8"/>
<rect x="883.5" y="802" width="4" height="4" fill="#000"/>
<rect x="886.5" y="859" width="1" height="5" fill="#000"/>
<rect x="903.5" y="799" width="4" height="3" fill="#0000c8"/>
<rect x="903.5" y="802" width="4" height="4" fill="#000"/>
<rect x="906.5" y="859" width="1" height="5" fill="#000"/>
<rect x="923.5" y="799" width="4" height="3" fill="#0000c8"/>
<rect x="923.5" y="802" width="4" height="4" fill="#000"/>
<rect x="926.5" y="859" width="1" height="5" fill="#000"/>
<rect x="943.5" y="799" width="4" height="3" fill="#0000c8"/>
<rect x="943.5" y="802" width="4" height="4" fill="#000"/>
<rect x="946.5" y="859" width="1" height="5" fill="#000"/>
<rect x="963.5" y="799" width="4" height="3" fill="#0000c8"/>
<rect x="963.5" y="802" width="4" height="4" fill="#000"/>
<rect x="966.5" y="859" width="1" height="5" fill="#000"/>
<rect x="983.5" y="799" width="4" height="3" fill="#0000c8"/>
<rect x="983.5" y="802" width="4" height="4" fill="#000"/>
<rect x="986.5" y="859" width="1" height="5" fill="#000"/>
<rect x="1003.5" y="799" width="4" height="3" fill="#0000c8"/>
<rect x="1003.5" y="802" width="4" height="4" fill="#000"/>
<rect x="1006.5" y="859" width="1" height="5" fill="#000"/>
<rect x="1023.5" y="799" width="4" height="3" fill="#0000c8"/>
<rect x="1023.5" y="802" width="4" height="4" fill="#000"/>
<rect x="1026.5" y="859" width="1" height="5" fill="#000"/>
<rect x="1043.5" y="799" width="4" height="3" fill="#0000c8"/>
<rect x="1043.5" y="802" width="4" height="4" fill="#000"/>
<rect x="1043.5" y="858" width="4" height="5" fill="#000"/>
<rect x="1043.5" y="863" width="4" height="3" fill="#ff0000"/>
<rect x="1063.5" y="799" width="4" height="3" fill="#0000c8"/>
<rect x="1063.5" y="802" width="4" height="4" fill="#000"/>
<rect x="1063.5" y="858" width="4" height="5" fill="#000"/>
<rect x="1063.5" y="863" width="4" height="3" fill="#ff0000"/>
<rect x="1083.5" y="799" width="4" height="3" fill="#0000c8"/>
<rect x="1083.5" y="802" width="4" height="4" fill="#000"/>
<rect x="1083.5" y="858" width="4" height="5" fill="#000"/>
<rect x="1083.5" y="863" width="4" height="3" fill="#ff0000"/>
<rect x="1106.5" y="799" width="1" height="7" fill="#000"/>
<rect x="1103.5" y="858" width="4" height="5" fill="#000"/>
<rect x="1103.5" y="863" width="4" height="3" fill="#ff0000"/>
<rect x="1126.5" y="799" width="1" height="7" fill="#000"/>
<rect x="1123.5" y="858" width="4" height="5" fill="#000"/>
<rect x="1123.5" y="863" width="4" height="3" fill="#ff0000"/>
<rect x="1143.5" y="799" width="4" height="3" fill="#0000c8"/>
<rect x="1143.5" y="802" width="4" height="4" fill="#000"/>
<rect x="1143.5" y="858" width="4" height="5" fill="#000"/>
<rect x="1143.5" y="863" width="4" height="3" fill="#ff0000"/>
<rect x="1166.5" y="799" width="1" height="7" fill="#000"/>
<rect x="1163.5" y="858" width="4" height="5" fill="#000"/>
<rect x="1163.5" y="863" width="4" height="3" fill="#ff0000"/>
<rect x="1186.5" y="799" width="1" height="7" fill="#000"/>
<rect x="1183.5" y="858" width="4" height="5" fill="#000"/>
<rect x="1183.5" y="863" width="4" height="3" fill="#ff0000"/>
<rect x="1206.5" y="799" width="1" height="7" fill="#000"/>
<rect x="1203.5" y="858" width="4" height="5" fill="#000"/>
<rect x="1203.5" y="863" width="4" height="3" fill="#ff0000"/>
<rect x="1226.5" y="799" width="1" height="7" fill="#000"/>
<rect x="1223.5" y="858" width="4" height="5" fill="#000"/>
<rect x="1223.5" y="863" width="4" height="3" fill="#ff0000"/>
<rect x="1246.5" y="799" width="1" height="7" fill="#000"/>
<rect x="1243.5" y="858" width="4" height="5" fill="#000"/>
<rect x="1243.5" y="863" width="4" height="3" fill="#ff0000"/>
<rect x="1266.5" y="799" width="1" height="7" fill="#000"/>
<rect x="1263.5" y="858" width="4" height="5" fill="#000"/>
<rect x="1263.5" y="863" width="4" height="3" fill="#ff0000"/>
<rect x="1286.5" y="799" width="1" height="7" fill="#000"/>
<rect x="1283.5" y="858" width="4" height="5" fill="#000"/>
<rect x="1283.5" y="863" width="4" height="3" fill="#ff0000"/>
<rect x="1306.5" y="799" width="1" height="7" fill="#000"/>
<rect x="1303.5" y="858" width="4" height="5" fill="#000"/>
<rect x="1303.5" y="863" width="4" height="3" fill="#ff0000"/>
<rect x="1326.5" y="799" width="1" height="7" fill="#000"/>
<rect x="1323.5" y="858" width="4" height="5" fill="#000"/>
<rect x="1323.5" y="863" width="4" height="3" fill="#ff0000"/>
<rect x="1346.5" y="799" width="1" height="7" fill="#000"/>
<rect x="1343.5" y="858" width="4" height="5" fill="#000"/>
<rect x="1343.5" y="863" width="4" height="3" fill="#ff0000"/>
<rect x="1366.5" y="799" width="1" height="7" fill="#000"/>
<rect x="1363.5" y="858" width="4" height="5" fill="#000"/>
<rect x="1363.5" y="863" width="4" height="3" fill="#ff0000"/>
<rect x="1386.5" y="799" width="1" height="7" fill="#000"/>
<rect x="1383.5" y="858" width="4" height="5" fill="#000"/>
<rect x="1383.5" y="863" width="4" height="3" fill="#ff0000"/>
<rect x="1406.5" y="799" width="1" height="7" fill="#000"/>
<rect x="1403.5" y="858" width="4" height="5" fill="#000"/>
<rect x="1403.5" y="863" width="4" height="3" fill="#ff0000"/>
<rect x="1426.5" y="799" width="1" height="7" fill="#000"/>
<rect x="1423.5" y="858" width="4" height="5" fill="#000"/>
<rect x="1423.5" y="863" width="4" height="3" fill="#ff0000"/>
<rect x="1446.5" y="799" width="1" height="7" fill="#000"/>
<rect x="1443.5" y="858" width="4" height="5" fill="#000"/>
<rect x="1443.5" y="863" width="4" height="3" fill="#ff0000"/>
</g>
<text x="3" y="751" fill="#fff">vip1TrendTimingSignal(ES 03-12 (Weekly),True)</text>
<g shape-rendering="crispEdges" fill="#fff">
<rect x="1475" y="57" width="1" height="873"/>
<rect x="0" y="729" width="1475" height="1"/>
<rect x="0" y="929" width="1476" height="1"/>
<rect x="1476" y="87" width="6" height="1"/>
<rect x="1476" y="122" width="6" height="1"/>
<rect x="1476" y="158" width="6" height="1"/>
<rect x="1476" y="194" width="6" height="1"/>
<rect x="1476" y="229" width="6" height="1"/>
<rect x="1476" y="265" width="6" height="1"/>
<rect x="1476" y="301" width="6" height="1"/>
<rect x="1476" y="336" width="6" height="1"/>
<rect x="1476" y="372" width="6" height="1"/>
<rect x="1476" y="408" width="6" height="1"/>
<rect x="1476" y="444" width="6" height="1"/>
<rect x="1476" y="479" width="6" height="1"/>
<rect x="1476" y="515" width="6" height="1"/>
<rect x="1476" y="551" width="6" height="1"/>
<rect x="1476" y="586" width="6" height="1"/>
<rect x="1476" y="622" width="6" height="1"/>
<rect x="1476" y="658" width="6" height="1"/>
<rect x="1476" y="693" width="6" height="1"/>
<rect x="1476" y="764" width="6" height="1"/>
<rect x="1476" y="798" width="6" height="1"/>
<rect x="1476" y="832" width="6" height="1"/>
<rect x="1476" y="867" width="6" height="1"/>
<rect x="1476" y="902" width="6" height="1"/>
<rect x="45" y="930" width="1" height="5"/>
<rect x="125" y="930" width="1" height="5"/>
<rect x="225" y="930" width="1" height="5"/>
<rect x="305" y="930" width="1" height="5"/>
<rect x="385" y="930" width="1" height="5"/>
<rect x="465" y="930" width="1" height="5"/>
<rect x="565" y="930" width="1" height="5"/>
<rect x="645" y="930" width="1" height="5"/>
<rect x="725" y="930" width="1" height="5"/>
<rect x="825" y="930" width="1" height="5"/>
<rect x="905" y="930" width="1" height="5"/>
<rect x="1005" y="930" width="1" height="5"/>
<rect x="1085" y="930" width="1" height="5"/>
<rect x="1165" y="930" width="1" height="5"/>
<rect x="1265" y="930" width="1" height="5"/>
<rect x="1345" y="930" width="1" height="5"/>
<rect x="1425" y="930" width="1" height="5"/>
</g>
<g fill="#fff">
<text x="1482" y="91.0">1400.00</text>
<text x="1482" y="126.7">1380.00</text>
<text x="1482" y="162.4">1360.00</text>
<text x="1482" y="198.1">1340.00</text>
<text x="1482" y="233.8">1320.00</text>
<text x="1482" y="269.5">1300.00</text>
<text x="1482" y="305.2">1280.00</text>
<text x="1482" y="340.9">1260.00</text>
<text x="1482" y="376.6">1240.00</text>
<text x="1482" y="412.3">1220.00</text>
<text x="1482" y="448.0">1200.00</text>
<text x="1482" y="483.7">1180.00</text>
<text x="1482" y="519.4">1160.00</text>
<text x="1482" y="555.1">1140.00</text>
<text x="1482" y="590.8">1120.00</text>
<text x="1482" y="626.5">1100.00</text>
<text x="1482" y="662.2">1080.00</text>
<text x="1482" y="697.9">1060.00</text>
<text x="1482" y="768">20</text>
<text x="1482" y="802">10</text>
<text x="1482" y="836">0</text>
<text x="1482" y="871">-10</text>
<text x="1482" y="906">-20</text>
<text x="45" y="946" text-anchor="middle">Nov</text>
<text x="125" y="946" text-anchor="middle">Dec</text>
<text x="225" y="946" text-anchor="middle">2011</text>
<text x="305" y="946" text-anchor="middle">Feb</text>
<text x="385" y="946" text-anchor="middle">Mar</text>
<text x="465" y="946" text-anchor="middle">Apr</text>
<text x="565" y="946" text-anchor="middle">May</text>
<text x="645" y="946" text-anchor="middle">Jun</text>
<text x="725" y="946" text-anchor="middle">Jul</text>
<text x="825" y="946" text-anchor="middle">Aug</text>
<text x="905" y="946" text-anchor="middle">Sep</text>
<text x="1005" y="946" text-anchor="middle">Oct</text>
<text x="1085" y="946" text-anchor="middle">Nov</text>
<text x="1165" y="946" text-anchor="middle">Dec</text>
<text x="1265" y="946" text-anchor="middle">2012</text>
<text x="1345" y="946" text-anchor="middle">Feb</text>
<text x="1425" y="946" text-anchor="middle">Mar</text>
</g>
<path d="M1476.5 66 L1483 60.0 H1525 V72.0 H1483 Z" fill="#008000" stroke="#fff" stroke-width="1"/><text x="1484" y="70" fill="#fff">1410.50</text>
<path d="M1476.5 77.5 L1483 71.5 H1525 V83.5 H1483 Z" fill="#000" stroke="#fff" stroke-width="1"/><text x="1484" y="81.5" fill="#fff">1405.00</text>
<path d="M1476.5 130.5 L1483 124.5 H1525 V136.5 H1483 Z" fill="#008000" stroke="#fff" stroke-width="1"/><text x="1484" y="134.5" fill="#fff"></text>
<path d="M1476.5 133 L1483 127.0 H1525 V139.0 H1483 Z" fill="#ff00ff" stroke="#fff" stroke-width="1"/><text x="1484" y="137" fill="#fff">1373.50</text>
<path d="M1476.5 163 L1483 157.0 H1525 V169.0 H1483 Z" fill="#ffd700" stroke="#fff" stroke-width="1"/><text x="1484" y="167" fill="#000">1356.50</text>
<path d="M1476.5 196.5 L1483 190.5 H1525 V202.5 H1483 Z" fill="#ff0000" stroke="#fff" stroke-width="1"/><text x="1484" y="200.5" fill="#fff"></text>
<path d="M1476.5 194 L1483 188.0 H1525 V200.0 H1483 Z" fill="#ff00ff" stroke="#fff" stroke-width="1"/><text x="1484" y="198" fill="#fff">1339.50</text>
<path d="M1476.5 260 L1483 254.0 H1525 V266.0 H1483 Z" fill="#ff0000" stroke="#fff" stroke-width="1"/><text x="1484" y="264" fill="#fff">1302.50</text>
<path d="M1476.5 745 L1483 739.0 H1512 V751.0 H1483 Z" fill="#0000ff" stroke="#fff" stroke-width="1"/><text x="1484" y="749" fill="#fff">25.33</text>
<path d="M1476.5 800 L1483 794.0 H1491 V806.0 H1483 Z" fill="#0000ff" stroke="none" stroke-width="1"/><text x="1484" y="804" fill="#fff"></text>
<path d="M1476.5 805 L1483 799.0 H1491 V811.0 H1483 Z" fill="#000" stroke="none" stroke-width="1"/><text x="1484" y="809" fill="#fff">8</text>
<path d="M1476.5 816 L1483 810.0 H1491 V822.0 H1483 Z" fill="#0000ff" stroke="none" stroke-width="1"/><text x="1484" y="820" fill="#fff">5</text>
<path d="M1476.5 832 L1483 826.0 H1491 V838.0 H1483 Z" fill="#000" stroke="none" stroke-width="1"/><text x="1484" y="836" fill="#fff">0</text>
<path d="M1476.5 849 L1483 843.0 H1495 V855.0 H1483 Z" fill="#ff0000" stroke="none" stroke-width="1"/><text x="1484" y="853" fill="#fff">-5</text>
<path d="M1476.5 864 L1483 858.0 H1495 V870.0 H1483 Z" fill="#ff0000" stroke="none" stroke-width="1"/><text x="1484" y="868" fill="#fff"></text>
<path d="M1476.5 860 L1483 854.0 H1495 V866.0 H1483 Z" fill="#000" stroke="none" stroke-width="1"/><text x="1484" y="864" fill="#fff">-8</text>
<rect x="1522.5" y="55.5" width="12" height="11" fill="none" stroke="#fff"/><text x="1525.3" y="65" fill="#fff" font-size="11">F</text>
</svg>
<div class="abs" style="left:0;top:0;width:1536px;height:18px;background:#848284"></div><svg class="abs" style="left:3px;top:2px" width="14" height="14" viewBox="0 0 14 14"><rect x="0.5" y="0.5" width="13" height="13" fill="#eeeefc" stroke="#b8b8e0"/><path d="M4.5 1 V13 M8.5 1 V13 M1 5.5 H13 M1 9.5 H13" stroke="#d0d0f0" stroke-width="1"/><polyline points="1,12 4,10 6,6 8,7 10,8 13,7" fill="none" stroke="#1a6ae0" stroke-width="1.5"/><polyline points="1,6 4,4 7,6 10,4 13,1" fill="none" stroke="#22b022" stroke-width="1.5"/></svg><div class="t dj" id="ttl" style="left:20px;top:3px;font-weight:bold;font-size:10px;color:#d4d0c8;line-height:14px;letter-spacing:0.12px">ES 03-12 (Weekly)&nbsp; Week 43/2010 - Week 11/2012</div><div class="abs" style="left:1468px;top:4px;width:10px;height:11px;background:#d4d0c8;border:1px solid #848284;box-sizing:border-box"></div><div class="t" style="left:1470px;top:3px;font-size:10px;line-height:12px;font-weight:bold">L</div><div class="btn" style="left:1484px;top:3px;width:16px;height:13px"></div><div class="btn" style="left:1500px;top:3px;width:16px;height:13px"></div><div class="btn" style="left:1517px;top:3px;width:16px;height:13px"></div><div class="abs" style="left:1488px;top:11px;width:6px;height:2px;background:#000"></div><svg class="abs" style="left:1502px;top:5px" width="12" height="10"><rect x="3.5" y="1" width="6" height="5" fill="none" stroke="#000"/><rect x="3" y="0" width="7" height="2" fill="#000"/><rect x="1.5" y="4" width="6" height="5" fill="#d4d0c8" stroke="#000"/><rect x="1" y="3" width="7" height="2" fill="#000"/></svg><svg class="abs" style="left:1520px;top:5px" width="10" height="9"><path d="M1 1 L8 8 M8 1 L1 8" stroke="#000" stroke-width="1.8"/></svg>
<div class="abs" style="left:0;top:18px;width:1536px;height:34px;background:linear-gradient(#fbfafa,#f3f1f1 40%,#ebe8e7 75%,#e2deda);"></div><div class="abs" style="left:0;top:50px;width:1536px;height:2px;background:#dcdad4"></div><div class="abs" style="left:3px;top:24px;width:2px;height:22px;background-image:linear-gradient(#808080 50%,transparent 50%);background-size:2px 4px"></div><div class="abs" style="left:10px;top:23px;width:1px;height:24px;background:#a0a0a0"></div><div class="t" style="left:17px;top:28px;font-size:11.5px;line-height:14px;letter-spacing:-0.25px">ES 03-12</div><div class="t" style="left:80px;top:28px;font-size:12px;line-height:14px;letter-spacing:-0.2px">Weekly</div><svg class="abs" style="left:67px;top:34px" width="5" height="3"><path d="M0 0 H5 L2.5 3 Z" fill="#000"/></svg><svg class="abs" style="left:121px;top:34px" width="5" height="3"><path d="M0 0 H5 L2.5 3 Z" fill="#000"/></svg><div class="abs" style="left:134px;top:23px;width:1px;height:24px;background:#a0a0a0"></div><div class="abs" style="left:244px;top:23px;width:1px;height:24px;background:#a0a0a0"></div><div class="abs" style="left:302px;top:23px;width:1px;height:24px;background:#a0a0a0"></div><svg class="abs" style="left:0;top:18px" width="430" height="34" viewBox="0 18 430 34"><line x1="142" y1="27" x2="142" y2="42.5" stroke="#000" stroke-width="1.6"/><rect x="140.3" y="29.2" width="3.4" height="11" rx="1.2" fill="#5fe03c" stroke="#1a7a10" stroke-width="0.5"/><line x1="141.6" y1="30" x2="141.6" y2="39" stroke="#fff" stroke-opacity="0.45" stroke-width="0.9"/><line x1="147" y1="27" x2="147" y2="42.5" stroke="#000" stroke-width="1.6"/><rect x="145.3" y="29.2" width="3.4" height="11" rx="1.2" fill="#5fe03c" stroke="#1a7a10" stroke-width="0.5"/><line x1="146.6" y1="30" x2="146.6" y2="39" stroke="#fff" stroke-opacity="0.45" stroke-width="0.9"/><line x1="152" y1="27" x2="152" y2="42.5" stroke="#000" stroke-width="1.6"/><rect x="150.3" y="29.2" width="3.4" height="11" rx="1.2" fill="#e84030" stroke="#801810" stroke-width="0.5"/><line x1="151.6" y1="30" x2="151.6" y2="39" stroke="#fff" stroke-opacity="0.45" stroke-width="0.9"/><path d="M157.2 34 h5 l-2.5 3 z" fill="#000"/><path d="M169.3 41 L170.8 37.2 L180.6 28.6 L182.9 31 L173 39.8 Z" fill="#f8e020" stroke="#8a7000" stroke-width="0.7"/><path d="M169.3 41 L170.8 37.2 L173 39.8 Z" fill="#e8c8a0" stroke="#705030" stroke-width="0.5"/><path d="M179.6 29.5 L180.6 28.6 L182.9 31 L181.9 31.9 Z" fill="#e04050"/><path d="M186 34 h5 l-2.5 3 z" fill="#000"/><line x1="199" y1="41.8" x2="203.5" y2="38" stroke="#505050" stroke-width="1.8"/><circle cx="206" cy="35.5" r="3.7" fill="#a8d0f4" stroke="#9aa4b0" stroke-width="1.3"/><circle cx="205.3" cy="34.6" r="1.5" fill="#e4f2ff"/><path d="M208 31 h6 M211 28 v6" stroke="#18a018" stroke-width="1.9"/><line x1="221.6" y1="41.8" x2="226" y2="38" stroke="#b8b8b8" stroke-width="1.8"/><circle cx="228.6" cy="35.5" r="3.7" fill="#dcdcdc" stroke="#c4c4c4" stroke-width="1.3"/><path d="M231 30.8 h6" stroke="#c4c4c4" stroke-width="1.7"/><path d="M250.4 29.6 L257 30.6 L255.2 32.4 L262.6 39.8 L260.6 41.8 L253.2 34.4 L251.4 36.2 Z" fill="#fff" stroke="#202020" stroke-width="0.9" stroke-linejoin="round"/><path d="M266.8 34 h5 l-2.5 3 z" fill="#000"/><rect x="280.5" y="27.5" width="13" height="14" fill="#fff" stroke="#909090"/><circle cx="287" cy="35.3" r="3.6" fill="#a8d0f4" stroke="#9aa4b0" stroke-width="1.3"/><circle cx="286.4" cy="34.5" r="1.4" fill="#e4f2ff"/><line x1="279.8" y1="41.8" x2="284.4" y2="38" stroke="#505050" stroke-width="1.8"/><path d="M311 32.5 h11 M311 34.5 h11 M311 40.5 h11" stroke="#d0d0d0" stroke-width="0.8"/><path d="M308.3 28 h5.6 l1.8 1.3 l-1.8 1.3 h-5.6 z" fill="#50e030" stroke="#208010" stroke-width="0.5"/><path d="M308.3 35.2 h5.6 l1.8 1.3 l-1.8 1.3 h-5.6 z" fill="#f03828" stroke="#801010" stroke-width="0.5"/><rect x="317.4" y="29.6" width="2.5" height="13.3" rx="1" fill="#50e030" stroke="#208010" stroke-width="0.5"/><rect x="320.8" y="37" width="2.2" height="5.9" rx="0.8" fill="#f03828" stroke="#801010" stroke-width="0.5"/><rect x="331.5" y="27.5" width="15" height="15" rx="1" fill="#f4f4f4" stroke="#707070"/><path d="M332 31.5 h14 M332 34.5 h14 M332 37.5 h14 M332 40.5 h14" stroke="#c8c8c8" stroke-width="0.7"/><line x1="334.5" y1="29.0" x2="334.5" y2="42.0" stroke="#000" stroke-width="1.4"/><rect x="333.3" y="30.2" width="2.4" height="10.6" rx="0.9" fill="#50e030" stroke="#107010" stroke-width="0.4"/><line x1="339" y1="27.3" x2="339" y2="39.400000000000006" stroke="#000" stroke-width="1.4"/><rect x="337.8" y="28.5" width="2.4" height="9.7" rx="0.9" fill="#50e030" stroke="#107010" stroke-width="0.4"/><line x1="343.4" y1="30.2" x2="343.4" y2="42.0" stroke="#000" stroke-width="1.4"/><rect x="342.2" y="31.4" width="2.4" height="9.4" rx="0.9" fill="#f03828" stroke="#801010" stroke-width="0.4"/><rect x="354.5" y="27.5" width="15" height="15" rx="1" fill="#eeeeee" stroke="#808080"/><rect x="355" y="36" width="14" height="6" fill="#d4d4d4"/><polyline points="355.5,34 357.5,30.5 359,32.5 362.5,29.2 364.5,30.5 367,31 368.5,33.2" fill="none" stroke="#30a868" stroke-width="0.9"/><polyline points="355.5,36.5 357.5,37.8 360.5,34.6 362,35.6 365,34.8 368.5,37.6" fill="none" stroke="#e04040" stroke-width="0.9"/><path d="M379.5 28.5 H387.6 L390.8 31.7 V41.5 H379.5 Z" fill="#fff" stroke="#8a8a8a"/><path d="M387.6 28.5 V31.7 H390.8" fill="none" stroke="#8a8a8a" stroke-width="0.7"/><text x="381.4" y="39.6" font-size="11.5" font-weight="bold" fill="#20a020" font-family="Liberation Sans,Arial,sans-serif">$</text><rect x="401.5" y="27.5" width="13.5" height="15" rx="0.8" fill="#fafaff" stroke="#8a8aa0"/><rect x="403" y="29.3" width="10.4" height="2.2" fill="#58a8e8"/><rect x="403.4" y="33.2" width="2.4" height="7.6" fill="#b060f0" stroke="#8030c0" stroke-width="0.4"/><path d="M407.4 34 h5.6 M407.4 36.4 h5.6 M407.4 38.8 h5.6 M407.4 40.6 h5.6" stroke="#c0c8e8" stroke-width="1.1"/></svg><div class="abs" style="left:424px;top:23px;width:1px;height:24px;background:#b0b0b0"></div><div class="abs" style="left:528px;top:23px;width:1px;height:24px;background:#b0b0b0"></div><div class="abs" style="left:643px;top:23px;width:1px;height:24px;background:#b0b0b0"></div><div class="abs" style="left:426px;top:19px;width:98px;height:30px;background:#fff;font-family:'DejaVu Sans','Liberation Sans',sans-serif;font-weight:bold;font-size:11px;color:#008000;text-align:center;line-height:13px;"><div style="margin-top:4px;letter-spacing:0.45px">vip1Statistics<br>ES</div></div><div class="abs" style="left:530px;top:19px;width:111px;height:30px;background:#fff;font-family:'DejaVu Sans','Liberation Sans',sans-serif;font-weight:bold;font-size:11px;color:#008000;text-align:center;line-height:13px;"><div style="margin-top:10px;margin-right:12px;letter-spacing:0.45px">vip1Triangles</div></div><svg class="abs" style="left:630px;top:34px" width="5" height="3"><path d="M0 0 H5 L2.5 3 Z" fill="#000"/></svg><div class="abs" style="left:646px;top:19px;width:175px;height:30px;background:#fff;font-family:'DejaVu Sans','Liberation Sans',sans-serif;font-weight:bold;font-size:11px;color:#008000;text-align:center;line-height:13px;"><div style="margin-top:4px;letter-spacing:0.45px">vip1ZoneTraderIndicator<br>ES</div></div><div class="abs" style="left:1490px;top:19px;width:38px;height:30px;background:#fff;font-family:'DejaVu Sans','Liberation Sans',sans-serif;font-weight:bold;font-size:11px;color:#008000;text-align:center;line-height:13px;color:#0000ff"><div style="margin-top:10px;letter-spacing:0px">Stats</div></div><div class="abs" style="left:1532px;top:19px;width:1px;height:30px;background:#808080"></div>
<div class="abs" style="left:978px;top:416px;width:432px;height:162px;box-sizing:border-box;border:1px solid #2a2a20;background:rgba(255,250,197,0.76);box-shadow:3px 3px 2px rgba(0,0,0,0.45)"></div><div id="n1" class="dj" style="font-weight:bold;font-style:italic;color:#1c2420;white-space:nowrap;position:absolute;text-align:center;left:976px;width:431px;top:438px;font-size:17.5px;line-height:24px;letter-spacing:-0.16px"><span>www.trading-software-download.com</span></div><div id="n2" class="dj" style="font-weight:bold;font-style:italic;color:#1c2420;white-space:nowrap;position:absolute;text-align:center;left:976px;width:431px;top:484px;font-size:17.5px;line-height:24px;letter-spacing:-0.45px"><span>andreybbrv@gmail.com</span></div><div id="n3" class="dj" style="font-weight:bold;font-style:italic;color:#1c2420;white-space:nowrap;position:absolute;text-align:center;left:976px;width:431px;top:530px;font-size:17.5px;line-height:24px;letter-spacing:-0.45px"><span>skype: andreybbrv</span></div>
<div class="abs" id="dlg" style="left:170px;top:402px;width:577px;height:496px;background:#d4d0c8;box-sizing:border-box;border:1px solid;border-color:#d4d0c8 #404040 #404040 #d4d0c8;box-shadow:inset 1px 1px 0 #fff,inset -1px -1px 0 #808080;"><div class="abs" style="left:1px;top:2px;width:574px;height:490px"><div class="abs" style="left:2px;top:1px;width:569px;height:16px;background:#0a246a"></div><div class="t dj" style="left:4px;top:3px;color:#fff;font-weight:bold;font-size:10px;line-height:13px;letter-spacing:0.1px">Indicators</div><div class="btn" style="left:559px;top:3px;width:11px;height:12px"></div><svg class="abs" style="left:561px;top:5px" width="8" height="8"><path d="M1 1 L6 6 M6 1 L1 6" stroke="#000" stroke-width="1.1"/></svg><div class="abs" style="left:1px;top:16px;width:279px;height:408px;border:1px solid;border-color:#808080 #fff #fff #808080;box-sizing:border-box"></div><div class="abs sunken" style="left:4px;top:18px;width:274px;height:226px;overflow:hidden"><div class="li" style="top:3px">vip1MM4Stats</div><div class="li" style="top:16px">vip1Normal</div><div class="li" style="top:29px">vip1P2</div><div class="li" style="top:42px">vip1Pivots</div><div class="li" style="top:55px">vip1Prophet</div><div class="li" style="top:68px">vip1PSquareAuto</div><div class="li" style="top:81px">vip1PSquareManual</div><div class="li" style="top:94px">vip1RightEdge</div><div class="li" style="top:107px">vip1RightEdgeIndy</div><div class="li" style="top:120px">vip1Statistics</div><div class="li" style="top:133px">vip1TrendTimingSignal</div><div class="li" style="top:146px">vip1Triangles</div><div class="li" style="top:159px">vip1ZoneTraderIndicator</div><div class="li" style="top:172px">ViperLines</div><div class="li" style="top:185px">VMA</div><div class="li" style="top:198px">VOL</div><div class="li" style="top:211px">VOLColored</div><div class="abs dith" style="left:255px;top:1px;width:17px;height:222px"></div><div class="btn" style="left:255px;top:1px;width:17px;height:17px"></div><svg class="abs" style="left:260px;top:7px" width="7" height="4"><path d="M0 4 H7 L3.5 0 Z" fill="#000"/></svg><div class="btn" style="left:255px;top:206px;width:17px;height:17px"></div><svg class="abs" style="left:260px;top:213px" width="7" height="4"><path d="M0 0 H7 L3.5 4 Z" fill="#000"/></svg><div class="btn" style="left:255px;top:190px;width:17px;height:9px"></div></div><div class="abs sunken" style="left:4px;top:248px;width:274px;height:134px;overflow:hidden"><div class="li" style="top:2px">vip1Statistics</div><div class="li" style="top:15px">vip1TrendTimingSignal(ES 03-12 (Weekly),True)</div><div class="li" style="top:28px">vip1Triangles</div><div class="abs" style="left:1px;top:41px;width:270px;height:13px;background:#0a246a"></div><div class="li" style="top:41px;color:#fff">vip1ZoneTraderIndicator(ES 03-12 (Weekly),0,10,0,0,4)</div></div><div class="btn" style="left:28px;top:391px;width:68px;height:24px;color:#808080;text-shadow:1px 1px 0 #fff">New</div><div class="btn" style="left:184px;top:391px;width:68px;height:24px">Remove</div><div class="btn" style="left:90px;top:452px;width:81px;height:24px;line-height:21px">OK</div><div class="abs" style="left:246px;top:451px;width:81px;height:26px;background:#000"></div><div class="btn" style="left:247px;top:452px;width:79px;height:24px;line-height:21px">Apply</div><div class="btn" style="left:403px;top:452px;width:81px;height:24px;line-height:21px">Close</div><div class="abs" style="left:286px;top:18px;width:283px;height:342px;border:1px solid #808080;box-sizing:border-box;background:#d4d0c8;overflow:hidden"><div class="pg cat" style="top:2px"><i class="pm"></i><b>Parameters</b></div><div class="pg" style="top:18px"><div class="n">01. StartHour</div><div class="v">0</div></div><div class="pg" style="top:34px"><div class="n">02. StartMinute</div><div class="v">0</div></div><div class="pg" style="top:50px"><div class="n">03. EndHour</div><div class="v">0</div></div><div class="pg" style="top:66px"><div class="n">04. EndMinute</div><div class="v">10</div></div><div class="pg" style="top:82px"><div class="n">05. TradeStopLoss</div><div class="v">4</div></div><div class="pg cat" style="top:98px"><i class="pm"></i><b>Data</b></div><div class="pg" style="top:114px"><div class="n">Calculate on bar close</div><div class="v">True</div></div><div class="pg" style="top:130px"><div class="n">Input series</div><div class="v">ES 03-12 (Weekly)</div></div><div class="pg" style="top:146px"><div class="n">Maximum bars look back</div><div class="v">TwoHundredFiftySix</div></div><div class="pg cat" style="top:162px"><i class="pm"></i><b>Visual</b></div><div class="pg" style="top:178px"><div class="n">Auto scale</div><div class="v">False</div></div><div class="pg" style="top:194px"><div class="n">Displacement</div><div class="v">0</div></div><div class="pg" style="top:210px"><div class="n">Display in Data Box</div><div class="v">True</div></div><div class="pg" style="top:226px"><div class="n" style="background:#d4d0c8">Label</div><div class="v">vip1ZoneTraderIndicator</div></div><div class="pg" style="top:242px"><div class="n">Panel</div><div class="v">Same as input series</div></div><div class="pg" style="top:258px"><div class="n">Price marker(s)</div><div class="v">True</div></div><div class="pg" style="top:274px"><div class="n">Scale justification</div><div class="v">Right</div></div><div class="pg cat" style="top:290px"><i class="pm"></i><b>Plots</b></div><div class="pg" style="top:306px"><i class="pm plus"></i><div class="n">HighStop</div><div class="v"><svg style="position:absolute;left:2px;top:1px" width="20" height="13"><rect x="0.5" y="0.5" width="19" height="12" fill="#fff" stroke="#000"/><polyline points="2,10 7,4 11,8 18,3" fill="none" stroke="#ff00ff" stroke-width="2"/></svg><span style="margin-left:26px">Line; Solid; 2px</span></div></div><div class="pg" style="top:322px"><i class="pm plus"></i><div class="n">LowStop</div><div class="v"><svg style="position:absolute;left:2px;top:1px" width="20" height="13"><rect x="0.5" y="0.5" width="19" height="12" fill="#fff" stroke="#000"/><polyline points="2,10 7,4 11,8 18,3" fill="none" stroke="#ff00ff" stroke-width="2"/></svg><span style="margin-left:26px">Line; Solid; 2px</span></div></div><div class="pg" style="top:338px"><i class="pm plus"></i><div class="n">Median</div><div class="v"><svg style="position:absolute;left:2px;top:1px" width="20" height="13"><rect x="0.5" y="0.5" width="19" height="12" fill="#fff" stroke="#000"/><polyline points="2,10 7,4 11,8 18,3" fill="none" stroke="#ff00ff" stroke-width="2"/></svg><span style="margin-left:26px">Line; Solid; 2px</span></div></div><div class="abs dith" style="left:265px;top:1px;width:16px;height:338px"></div><div class="btn" style="left:265px;top:1px;width:16px;height:16px"></div><svg class="abs" style="left:269px;top:7px" width="7" height="4"><path d="M0 4 H7 L3.5 0 Z" fill="#000"/></svg><div class="btn" style="left:265px;top:17px;width:16px;height:230px"></div><div class="btn" style="left:265px;top:323px;width:16px;height:16px"></div><svg class="abs" style="left:269px;top:329px" width="7" height="4"><path d="M0 0 H7 L3.5 4 Z" fill="#000"/></svg></div><div class="abs" style="left:286px;top:364px;width:283px;height:58px;border:1px solid;border-color:#808080 #fff #fff #808080;box-sizing:border-box"></div><div class="t" style="left:291px;top:367px;font-weight:bold;letter-spacing:0.3px">Label</div><svg class="abs" style="left:557px;top:475px" width="13" height="13"><path d="M12 1 L1 12 M12 5 L5 12 M12 9 L9 12" stroke="#808080" stroke-width="1.2"/><path d="M12 2 L2 12 M12 6 L6 12 M12 10 L10 12" stroke="#fff" stroke-width="1"/></svg></div></div>
<div class="abs dith" style="left:0;top:956px;width:1536px;height:24px"></div><div class="btn" style="left:0;top:957px;width:16px;height:22px"></div><svg class="abs" style="left:5px;top:964px" width="5" height="8"><path d="M5 0 V8 L0 4 Z" fill="#000"/></svg><div class="btn" style="left:1026px;top:957px;width:494px;height:22px"></div><div class="btn" style="left:1520px;top:957px;width:16px;height:22px"></div><svg class="abs" style="left:1526px;top:964px" width="5" height="8"><path d="M0 0 V8 L5 4 Z" fill="#000"/></svg><div class="abs" style="left:0;top:980px;width:1536px;height:30px;background:#d4d0c8;border-top:1px solid #fff;box-sizing:border-box"></div><div class="tb" style="left:2px;width:52px"><span class="dj" style="left:18px;font-weight:bold;font-size:10.5px;letter-spacing:-0.2px">Start</span></div><svg class="abs" style="left:5px;top:986px" width="16" height="16"><path d="M1 3 Q4 1 7 3 L6 8 Q3 6 0 8 Z" fill="#e04020"/><path d="M8 3 Q11 5 14 3 L13 8 Q10 10 7 8 Z" fill="#40a030"/><path d="M0 9 Q3 7 6 9 L5 14 Q2 12 -1 14 Z" fill="#3060d0"/><path d="M7 9 Q10 11 13 9 L12 14 Q9 16 6 14 Z" fill="#e8b820"/></svg><div class="tb" style="left:59px;width:160px"><span style="letter-spacing:0.12px">Total Commander 7.03 - ...</span></div><svg class="abs" style="left:63px;top:987px" width="16" height="16"><rect x="0.5" y="0.5" width="14" height="14" fill="#1838c0" stroke="#0a1a70"/><rect x="3" y="1" width="8" height="5" fill="#fff"/><rect x="2" y="8" width="11" height="6" fill="#fff"/><path d="M3 10 h9 M3 12 h9" stroke="#e02020"/></svg><div class="tb" style="left:222px;width:160px"><span style="letter-spacing:0.12px">Lister - [G:\! Need to upl...</span></div><svg class="abs" style="left:226px;top:987px" width="16" height="16"><path d="M2 1 H13 L12 5 L14 9 L12 14 H2 L4 10 L2 6 Z" fill="#a8c8e8" stroke="#5070a0"/><path d="M5 4 h6 M5 7 h6 M5 10 h6" stroke="#fff"/></svg><div class="tb" style="left:385px;width:160px"><span style="letter-spacing:0.12px">Windows Task Manager</span></div><svg class="abs" style="left:389px;top:987px" width="16" height="16"><rect x="1.5" y="1.5" width="13" height="10" fill="#c0c0c0" stroke="#000"/><rect x="3" y="3" width="10" height="7" fill="#000"/><polyline points="4,8 6,5 8,7 10,4 12,6" fill="none" stroke="#00e000"/><rect x="3" y="12" width="11" height="3" fill="#c0c0c0" stroke="#000" stroke-width="0.8"/></svg><div class="tb" style="left:548px;width:160px"><span style="letter-spacing:0.12px">NinjaTrader 7 lic.emu v5.06</span></div><svg class="abs" style="left:552px;top:989px" width="16" height="12"><path d="M3.2 10.2 Q0 5.5 4.2 1.2" fill="none" stroke="#a8988e" stroke-width="1.7"/><path d="M5.2 10.4 Q5.4 4.5 7.2 0.8" fill="none" stroke="#8a6a58" stroke-width="1.9"/><path d="M7.6 1.6 L9.6 9.8 L12.4 2.2" fill="none" stroke="#c8202a" stroke-width="2.1" stroke-linejoin="round"/><path d="M11.2 0.8 Q16 4.5 10.8 10.4" fill="none" stroke="#c8202a" stroke-width="1.3"/></svg><div class="tb" style="left:711px;width:160px"><span style="letter-spacing:0.12px">Control Center - Untitled1</span></div><svg class="abs" style="left:715px;top:989px" width="16" height="12"><path d="M3.2 10.2 Q0 5.5 4.2 1.2" fill="none" stroke="#a8988e" stroke-width="1.7"/><path d="M5.2 10.4 Q5.4 4.5 7.2 0.8" fill="none" stroke="#8a6a58" stroke-width="1.9"/><path d="M7.6 1.6 L9.6 9.8 L12.4 2.2" fill="none" stroke="#c8202a" stroke-width="2.1" stroke-linejoin="round"/><path d="M11.2 0.8 Q16 4.5 10.8 10.4" fill="none" stroke="#c8202a" stroke-width="1.3"/></svg><div class="tb" style="left:874px;width:160px"><span style="letter-spacing:0.12px">ES 03-12 (Weekly)&nbsp; Wee...</span></div><svg class="abs" style="left:878px;top:987px" width="16" height="14"><rect x="0.5" y="0.5" width="15" height="13" fill="#fff" stroke="#2a4a8a"/><polyline points="1,11 4,7 6,9 9,4 12,6 15,2" fill="none" stroke="#1a5acc" stroke-width="1.6"/><polyline points="1,12 5,10 8,11 12,8 15,9" fill="none" stroke="#2a9a2a" stroke-width="1.2"/></svg><div class="tb" style="left:1037px;width:160px;border-color:#404040 #fff #fff #404040;box-shadow:inset 1px 1px 0 #808080;background-color:#eae8e3;background-image:linear-gradient(45deg,#d4d0c8 25%,transparent 25%,transparent 75%,#d4d0c8 75%),linear-gradient(45deg,#d4d0c8 25%,#fff 25%,#fff 75%,#d4d0c8 75%);background-size:2px 2px;background-position:0 0,1px 1px"><span class="dj" style="font-weight:bold;font-size:10px;left:23px;top:1px;letter-spacing:0.1px">Indicators</span></div><svg class="abs" style="left:1042px;top:990px" width="16" height="12"><path d="M3.2 10.2 Q0 5.5 4.2 1.2" fill="none" stroke="#a8988e" stroke-width="1.7"/><path d="M5.2 10.4 Q5.4 4.5 7.2 0.8" fill="none" stroke="#8a6a58" stroke-width="1.9"/><path d="M7.6 1.6 L9.6 9.8 L12.4 2.2" fill="none" stroke="#c8202a" stroke-width="2.1" stroke-linejoin="round"/><path d="M11.2 0.8 Q16 4.5 10.8 10.4" fill="none" stroke="#c8202a" stroke-width="1.3"/></svg><div class="abs" style="left:1430px;top:988px;width:15px;height:14px;background:#0a246a"></div><div class="t" style="left:1431px;top:989px;color:#fff;font-size:11px;line-height:12px;letter-spacing:-0.3px">EN</div><div class="abs" style="left:1450px;top:984px;width:1px;height:21px;background:#808080"></div><div class="abs" style="left:1451px;top:984px;width:1px;height:21px;background:#fff"></div><div class="abs" style="left:1455px;top:984px;width:79px;height:21px;box-sizing:border-box;border:1px solid;border-color:#808080 #fff #fff #808080"></div><div class="t" style="left:1461px;top:988px;font-weight:bold;font-size:12px">«</div><div class="abs" style="left:1477px;top:988px;width:11px;height:12px;background:#108010;border:1px solid #000;box-sizing:border-box;background-image:linear-gradient(90deg,#000 1px,transparent 1px),linear-gradient(#000 1px,transparent 1px);background-size:3px 3px"></div><div class="t" style="left:1497px;top:988px;font-size:11px;letter-spacing:0.3px">02:52</div>
</body></html>
